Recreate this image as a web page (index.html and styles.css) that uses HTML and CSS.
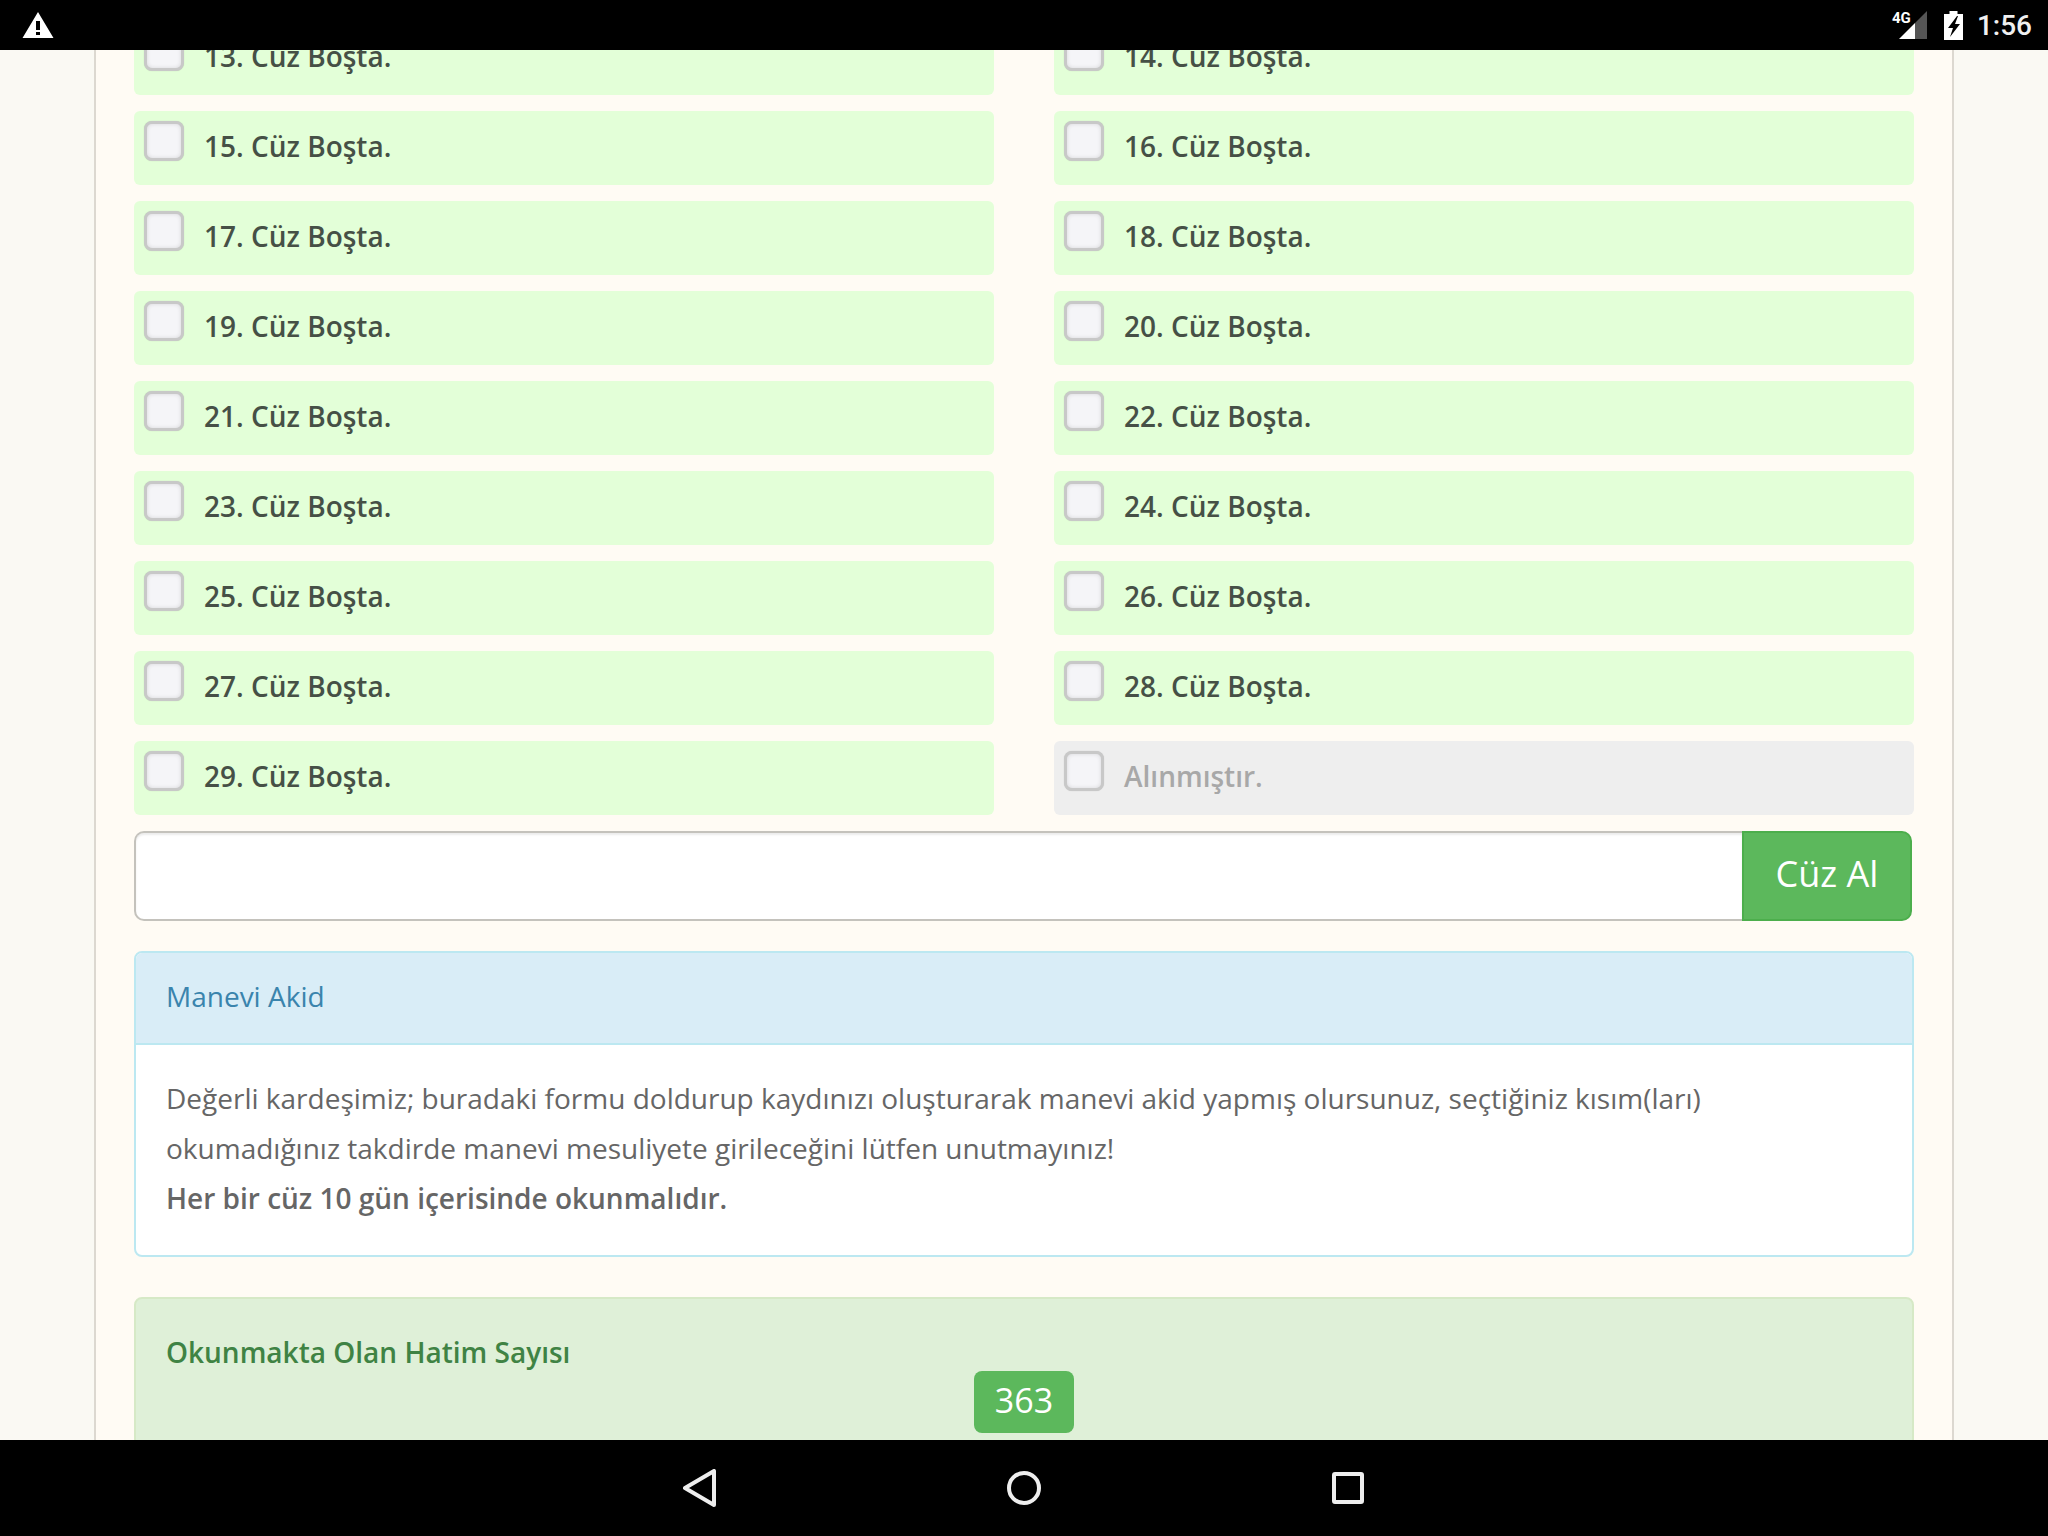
FILE: index.html
```html
<!DOCTYPE html>
<html lang="tr">
<head>
<meta charset="utf-8">
<title>Cüz Al</title>
<link rel="stylesheet" href="styles.css">
</head>
<body>
<div class="screen">
  <header class="status-bar">
    <svg class="warn" width="32" height="28" viewBox="0 0 32 28"><path fill="#fff" fill-rule="evenodd" d="M16 1 31.500 27H.5ZM14 10v9h4v-9ZM14 21v3h4v-3Z"/></svg>
    <div class="status-right">
      <span class="net">4G</span>
      <svg class="signal" width="28" height="28" viewBox="0 0 28 28"><path fill="#555" d="M28 0V28H16V12Z"/><path fill="#fff" d="M0 28 16 12V28Z"/></svg>
      <svg class="battery" width="19" height="29" viewBox="0 0 19 29"><path fill="#fff" d="M5.500 0h8v3H19v26H0V3h5.500Z"/><path fill="#000" d="M13 5 4 17h5l-3 9 10-13h-5l3-8Z"/></svg>
      <span class="clock">1:56</span>
    </div>
  </header>
  <main class="viewport">
    <div class="page">
      <div class="grid">
        <label class="row"><span class="check"></span><span>13. Cüz Boşta.</span></label>
        <label class="row"><span class="check"></span><span>14. Cüz Boşta.</span></label>
        <label class="row"><span class="check"></span><span>15. Cüz Boşta.</span></label>
        <label class="row"><span class="check"></span><span>16. Cüz Boşta.</span></label>
        <label class="row"><span class="check"></span><span>17. Cüz Boşta.</span></label>
        <label class="row"><span class="check"></span><span>18. Cüz Boşta.</span></label>
        <label class="row"><span class="check"></span><span>19. Cüz Boşta.</span></label>
        <label class="row"><span class="check"></span><span>20. Cüz Boşta.</span></label>
        <label class="row"><span class="check"></span><span>21. Cüz Boşta.</span></label>
        <label class="row"><span class="check"></span><span>22. Cüz Boşta.</span></label>
        <label class="row"><span class="check"></span><span>23. Cüz Boşta.</span></label>
        <label class="row"><span class="check"></span><span>24. Cüz Boşta.</span></label>
        <label class="row"><span class="check"></span><span>25. Cüz Boşta.</span></label>
        <label class="row"><span class="check"></span><span>26. Cüz Boşta.</span></label>
        <label class="row"><span class="check"></span><span>27. Cüz Boşta.</span></label>
        <label class="row"><span class="check"></span><span>28. Cüz Boşta.</span></label>
        <label class="row"><span class="check"></span><span>29. Cüz Boşta.</span></label>
        <label class="row taken"><span class="check"></span><span>Alınmıştır.</span></label>
      </div>
      <form class="input-group">
        <div class="field"></div>
        <div class="btn">Cüz Al</div>
      </form>
      <section class="panel">
        <div class="panel-head">Manevi Akid</div>
        <div class="panel-body">Değerli kardeşimiz; buradaki formu doldurup kaydınızı oluşturarak manevi akid yapmış olursunuz, seçtiğiniz kısım(ları) okumadığınız takdirde manevi mesuliyete girileceğini lütfen unutmayınız!<br><strong>Her bir cüz 10 gün içerisinde okunmalıdır.</strong></div>
      </section>
      <section class="well">
        <div class="well-title">Okunmakta Olan Hatim Sayısı</div>
        <div class="badge-line"><span class="badge">363</span></div>
      </section>
    </div>
  </main>
  <nav class="nav-bar">
    <svg width="34" height="38" viewBox="0 0 34 38"><path fill="none" stroke="#eee" stroke-width="4" stroke-linejoin="round" d="M31 2V36L2 19Z"/></svg>
    <svg width="34" height="34" viewBox="0 0 34 34"><circle cx="17" cy="17" r="15" fill="none" stroke="#eee" stroke-width="4"/></svg>
    <svg width="34" height="32" viewBox="0 0 34 32"><rect x="3" y="2" width="28" height="28" rx="1" fill="none" stroke="#eee" stroke-width="4"/></svg>
  </nav>
</div>
</body>
</html>
```
FILE: styles.css
```css
* { box-sizing: border-box; }
html, body { margin: 0; padding: 0; }
body { font-family: "Open Sans", sans-serif; background: #faf9f3; }
.screen { width: 2048px; height: 1536px; display: flex; flex-direction: column; overflow: hidden; }
.status-bar { height: 50px; flex: none; background: #000; display: flex; align-items: center; justify-content: space-between; padding: 0 16px 0 22px; }
.status-right { display: flex; align-items: center; color: #fff; position: relative; }
.net { font-family: Roboto, sans-serif; font-size: 15px; font-weight: 700; position: absolute; left: 0; top: 0; line-height: 18px; }
.signal { margin-left: 7px; margin-right: 17px; }
.battery { margin-right: 14px; }
.clock { font-family: Roboto, sans-serif; font-size: 28px; font-weight: 500; color: #f0f0f0; }
.viewport { flex: 1; overflow: hidden; min-height: 0; }
.page { width: 1860px; margin: -29px 0 0 94px; padding: 0 38px; background: #fffbf4; border-left: 2px solid #dcd8d0; border-right: 2px solid #dcd8d0; }
.grid { display: grid; grid-template-columns: 860px 860px; column-gap: 60px; row-gap: 16px; }
.row { height: 74px; background: #e3ffd8; border-radius: 6px; display: flex; padding: 10px 0 0 10px; gap: 20px; font-size: 28px; font-weight: 600; color: #465046; line-height: 50px; }
.row.taken { background: #eee; color: #a8a8a8; }
.check { width: 40px; height: 40px; flex: none; background: #f5f5f8; border: 3px solid #c8c8c8; border-radius: 8px; box-shadow: inset 0 0 4px rgba(0,0,0,.12), 0 0 1px rgba(0,0,0,.2); }
.input-group { display: flex; margin-top: 16px; height: 90px; width: 1778px; }
.field { flex: 1; background: #fff; border: 2px solid #c4c2bc; border-right: 0; border-radius: 10px 0 0 10px; box-shadow: inset 0 2px 2px rgba(0,0,0,.08); }
.btn { width: 170px; background: #5cb85c; border: 2px solid #4cae4c; border-radius: 0 10px 10px 0; color: #fff; font-size: 36px; display: flex; align-items: center; justify-content: center; padding-bottom: 5px; }
.panel { margin-top: 30px; width: 1780px; height: 306px; border: 2px solid #bce8f1; border-radius: 8px; background: #fff; overflow: hidden; }
.panel-head { height: 92px; background: #d9edf7; border-bottom: 2px solid #bce8f1; color: #3a84ad; font-size: 28px; padding: 0 0 4px 30px; display: flex; align-items: center; }
.panel-body { padding: 28px 30px 0; font-size: 28px; line-height: 50px; color: #666; }
.panel-body strong { font-weight: 600; }
.well { margin-top: 40px; width: 1780px; height: 200px; background: #dff0d8; border: 2px solid #d6e9c6; border-radius: 8px; padding: 28px 30px 0; color: #3f8344; }
.well-title { font-size: 28px; font-weight: 600; line-height: 50px; }
.badge-line { text-align: center; margin-top: -6px; }
.badge { display: inline-block; width: 100px; height: 62px; line-height: 58px; background: #5cb85c; color: #fff; font-size: 34px; border-radius: 8px; text-align: center; }
.nav-bar { height: 96px; flex: none; background: #000; display: flex; align-items: center; justify-content: center; gap: 290px; }
```
